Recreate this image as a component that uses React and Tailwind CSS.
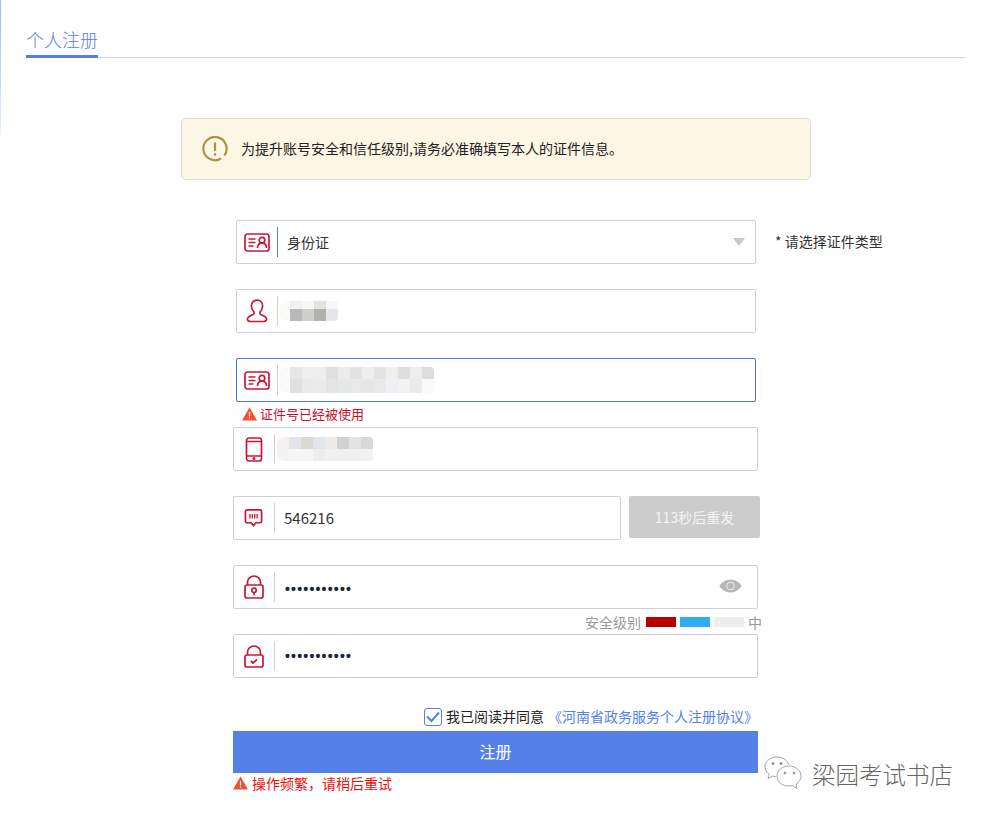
const CJK = "font-['Noto_Sans_CJK_SC','Microsoft_YaHei',sans-serif]";
const RED = "#c8183a";

function IdIcon() {
  return (
    <svg width="26" height="19" viewBox="0 0 26 19" fill="none" stroke={RED} strokeWidth="1.700" className="-ml-[1px]">
      <rect x="1" y="1" width="24" height="17" rx="2.500" />
      <path d="M4.500 6h7M4.500 9.500h7M4.500 13h5" />
      <circle cx="18" cy="7.200" r="2.800" />
      <path d="M13.500 15c0-3.200 2-4.800 4.500-4.800s4.500 1.600 4.500 4.800" />
    </svg>
  );
}
function UserIcon() {
  return (
    <svg width="22" height="24" viewBox="0 0 22 24" fill="none" stroke={RED} strokeWidth="1.700">
      <path d="M11 1.200c-3.600 0-5.600 2.600-5.600 5.800 0 2.600 1 4.400 2.400 5.800.6.700.5 2-.5 2.600-1.600.9-5.600 1.900-5.900 4.600-.2 1.500 1.400 2.500 3.400 2.500h12.400c2 0 3.600-1 3.400-2.500-.3-2.700-4.300-3.700-5.900-4.600-1-.6-1.100-1.900-.5-2.600 1.400-1.400 2.400-3.200 2.400-5.800 0-3.200-2-5.800-5.600-5.800z" />
    </svg>
  );
}
function PhoneIcon() {
  return (
    <svg width="18" height="25" viewBox="0 0 18 25" fill="none" stroke={RED} strokeWidth="1.700" className="-ml-[1px]">
      <rect x="1.500" y="1" width="15" height="23" rx="2.500" />
      <path d="M1.500 4.500h15M1.500 19h15" />
      <circle cx="9" cy="21.500" r="0.700" fill={RED} />
    </svg>
  );
}
function SmsIcon() {
  return (
    <svg width="19" height="20" viewBox="0 0 20 20" fill="none" stroke={RED} strokeWidth="1.800" className="-ml-[1px]">
      <path d="M3 1.500h14a1.500 1.500 0 0 1 1.500 1.500v10.500a1.500 1.500 0 0 1-1.500 1.500h-4.500L10 18l-2.500-3H3a1.500 1.500 0 0 1-1.500-1.500V3A1.500 1.500 0 0 1 3 1.500z" />
      <path d="M6.300 5.800v4.700M8.800 5.800v4.700M11.300 5.800v4.700M13.800 5.800v4.700" strokeWidth="1.400" />
    </svg>
  );
}
function LockIcon() {
  return (
    <svg width="20" height="24" viewBox="0 0 20 24" fill="none" stroke={RED} strokeWidth="1.700" className="-ml-[1px]">
      <path d="M3.500 10V7a6.500 6 0 0 1 13 0V10" />
      <rect x="1" y="10" width="18" height="13" rx="2" />
      <circle cx="10" cy="15.300" r="2.200" />
      <path d="M10 17.500v2.800" />
    </svg>
  );
}
function LockCheckIcon() {
  return (
    <svg width="20" height="23" viewBox="0 0 20 23" fill="none" stroke={RED} strokeWidth="1.700" className="-ml-[1px]">
      <path d="M3.500 10V7a6.500 6 0 0 1 13 0V10" />
      <rect x="1" y="10" width="18" height="12" rx="2" />
      <path d="M6.800 16l2.200 2 4-3.500" />
    </svg>
  );
}
function EyeIcon() {
  return (
    <svg width="23" height="14" viewBox="0 0 24 14">
      <path d="M12 0.200C6.500 0.200 2.500 3.800 0.300 7c2.200 3.200 6.200 6.800 11.700 6.800S21.500 10.200 23.700 7C21.500 3.800 17.500 0.200 12 0.200z" fill="#b8b8b8" />
      <circle cx="12" cy="7" r="4.200" fill="#fff" />
      <circle cx="12" cy="7" r="3.500" fill="#b8b8b8" />
    </svg>
  );
}
function Warn({ color }) {
  return (
    <svg width="15" height="14" viewBox="0 0 15 14" className="shrink-0">
      <path d="M7.500 0.500L15 13.500H0z" fill={color} />
      <path d="M7.500 5v4.500M7.500 10.500v1.300" stroke="#fff" strokeWidth="1.200" />
    </svg>
  );
}
function WeChat() {
  return (
    <svg width="38" height="34" viewBox="0 0 38 34" fill="none" stroke="#999" strokeWidth="0.900">
      <path d="M13 1C6.400 1 1 5.400 1 10.800c0 3 1.700 5.700 4.300 7.500L4 22.500l4.700-2.400c1 .3 2 .5 3 .6" fill="#fff" />
      <path d="M13 1c5.800 0 10.700 3.300 11.800 7.800" />
      <path d="M25 10c-6.600 0-12 4.200-12 10.200S18.400 30 25 30c1.300 0 2.500-.2 3.600-.5l4.400 3-1-4.300c3-1.900 5-4.700 5-8 0-6-5.400-10.200-12-10.200z" fill="#fff" />
      <circle cx="9" cy="7.500" r="1.100" fill="#888" />
      <circle cx="17" cy="7.500" r="1.100" fill="#888" />
      <circle cx="21" cy="17" r="1" fill="#888" />
      <circle cx="30" cy="17" r="1" fill="#888" />
    </svg>
  );
}

function Field({ icon, active, blueDivider, className, children }) {
  return (
    <div className={`flex h-[44px] items-center rounded-[2px] border bg-white ${active ? "border-[#4a78e0]" : "border-[#d0d0d0]"} ${className}`}>
      <div className="flex w-[40px] items-center justify-center">{icon}</div>
      <div className={`h-[30px] w-px ${blueDivider ? "bg-[#5a7fd0]" : "bg-[#d0d0d0]"}`} />
      {children}
    </div>
  );
}

function Mosaic({ rows, cols, className }) {
  return (
    <div className={`grid overflow-hidden rounded-l-[8px] rounded-r-[4px] blur-[0.6px] ${cols} ${className}`}>
      {rows.map((c, i) => (
        <div key={i} className={c} />
      ))}
    </div>
  );
}

const nameCells = [
  "h-[8px] bg-[#fbfbf9]", "h-[8px] bg-[#f1f1f1]", "h-[8px] bg-[#f6f6f6]", "h-[8px] bg-[#e3e3df]", "h-[8px] bg-[#f6f7fa]",
  "h-[12px] bg-[#fafaf6]", "h-[12px] bg-[#b9b9b9]", "h-[12px] bg-[#cfcfcc]", "h-[12px] bg-[#b2b2ac]", "h-[12px] bg-[#e6e7ed]",
];
const idCells = [
  "h-[12px] bg-[#fafafa]", "h-[12px] bg-[#e6e6e6]", "h-[12px] bg-[#eeeeee]", "h-[12px] bg-[#eeeeee]", "h-[12px] bg-[#e0e0e0]", "h-[12px] bg-[#ececec]", "h-[12px] bg-[#e2e2e2]", "h-[12px] bg-[#eeeeec]", "h-[12px] bg-[#e2e4e4]", "h-[12px] bg-[#f0efed]", "h-[12px] bg-[#dfdfdf]", "h-[12px] bg-[#eeeeee]", "h-[12px] bg-[#dddddd]",
  "h-[14px] bg-[#fafafa]", "h-[14px] bg-[#e0e0e0]", "h-[14px] bg-[#eaeaea]", "h-[14px] bg-[#ebebeb]", "h-[14px] bg-[#e3e4e3]", "h-[14px] bg-[#e5e8e8]", "h-[14px] bg-[#e8e8e8]", "h-[14px] bg-[#e7e7e7]", "h-[14px] bg-[#ebe9e7]", "h-[14px] bg-[#eef0f3]", "h-[14px] bg-[#f3f1f1]", "h-[14px] bg-[#eaeae8]", "h-[14px] bg-[#fafafa]",
];
const phoneCells = [
  "h-[12px] bg-[#f3f0ee]", "h-[12px] bg-[#e2e4ea]", "h-[12px] bg-[#dcd8d3]", "h-[12px] bg-[#e2e4ec]", "h-[12px] bg-[#ecebe9]", "h-[12px] bg-[#d2d0d0]", "h-[12px] bg-[#e2e4e4]", "h-[12px] bg-[#d8d8d8]",
  "h-[12px] bg-[#f5f3f2]", "h-[12px] bg-[#f5f6f7]", "h-[12px] bg-[#f6f6f5]", "h-[12px] bg-[#eeedeb]", "h-[12px] bg-[#eff0f2]", "h-[12px] bg-[#f0f0f0]", "h-[12px] bg-[#f0f0ee]", "h-[12px] bg-[#f0f1f3]",
];

const Dots = ({ className }) => (
  <span className={`ml-[10px] font-['Liberation_Sans',sans-serif] text-[14px] font-bold tracking-[1.200px] text-[#1c2633] ${className}`}>•••••••••••</span>
);

export default function App() {
  return (
    <div className={`relative h-[817px] w-[985px] overflow-hidden bg-white ${CJK}`}>
      <div className="absolute left-0 top-0 h-[135px] w-px bg-gradient-to-b from-[#8fbdf5] to-[#e6f1fe]" />

      <div className="ml-[26px] mr-[19px] flex h-[58px] items-end border-b border-[#d6d6de]">
        <div className="-mb-px flex h-[31px] w-[72px] items-start border-b-[3px] border-[#5580e8] text-[18px] font-light leading-[24px] whitespace-nowrap text-[#5580e8]">
          个人注册
        </div>
      </div>

      <div className="ml-[181px] mt-[60px] flex h-[62px] w-[630px] items-center rounded-[5px] border border-[#dddcd2] bg-[#fcf6e5] pl-[20px]">
        <svg width="26" height="26" viewBox="0 0 26 26" fill="none" stroke="#aa9545" strokeWidth="2.200">
          <path d="M19 22.500A11.600 11.600 0 1 1 22.300 19.500" />
          <path d="M13 6.500v8.500M13 17.300v2.500" />
        </svg>
        <span className="mb-[2px] ml-[13px] text-[14px] leading-none text-[#222]">为提升账号安全和信任级别,请务必准确填写本人的证件信息。</span>
      </div>

      <div className="ml-[233px] mt-[40px] flex w-[525px] flex-col">
        <div className="flex">
          <Field icon={<IdIcon />} blueDivider className="ml-[3px] w-[520px] shrink-0">
            <span className="ml-[9px] flex-1 text-[14px] text-[#333]">身份证</span>
            <div className="mr-[10px] h-0 w-0 border-x-[6px] border-t-[8px] border-x-transparent border-t-[#c8c8c8]" />
          </Field>
          <span className="ml-[19px] mt-[11px] shrink-0 whitespace-nowrap text-[14px] text-[#333]">* 请选择证件类型</span>
        </div>

        <Field icon={<UserIcon />} className="ml-[3px] mt-[25px] w-[520px]">
          <Mosaic rows={nameCells} cols="grid-cols-[11px_12px_12px_12px_12px]" className="ml-[1px]" />
        </Field>

        <Field icon={<IdIcon />} active className="ml-[3px] mt-[25px] w-[520px]">
          <Mosaic rows={idCells} cols="grid-cols-[11px_repeat(12,12px)]" className="ml-[1px]" />
        </Field>

        <div className="ml-[9px] flex h-[25px] items-center gap-[3px] pb-[1px] text-[13px] text-[#c8102e]">
          <Warn color="#f4502f" />
          <span>证件号已经被使用</span>
        </div>

        <Field icon={<PhoneIcon />} className="w-[525px]">
          <Mosaic rows={phoneCells} cols="grid-cols-[repeat(8,12px)]" className="ml-[2px]" />
        </Field>

        <div className="mt-[25px] flex items-start">
          <Field icon={<SmsIcon />} className="w-[388px] shrink-0">
            <span className="ml-[9px] text-[15px] text-[#333]">546216</span>
          </Field>
          <div className="ml-[8px] flex h-[42px] w-[131px] shrink-0 items-center justify-center rounded-[2px] bg-[#cccccc] text-[14px] text-[#f4f4f4]">
            113秒后重发
          </div>
        </div>

        <Field icon={<LockIcon />} className="mt-[25px] w-[525px]">
          <div className="flex-1"><Dots /></div>
          <div className="mb-[3px] mr-[15px]"><EyeIcon /></div>
        </Field>

        <div className="-mr-1 flex h-[25px] items-center justify-end pt-[1px] text-[14px] text-[#999]">
          <span>安全级别</span>
          <div className="ml-[5px] h-[10px] w-[30px] bg-[#b80000]" />
          <div className="ml-[4px] h-[10px] w-[30px] bg-[#2eaeee]" />
          <div className="ml-[4px] h-[10px] w-[30px] bg-[#eeeeee]" />
          <span className="ml-[4px]">中</span>
        </div>

        <Field icon={<LockCheckIcon />} className="w-[525px]">
          <Dots className="mt-[1px]" />
        </Field>

        <div className="mt-[30px] flex h-[18px] items-center justify-end text-[14px] leading-none">
          <div className="flex h-[18px] w-[18px] items-center justify-center rounded-[3px] border border-[#5580e8]">
            <svg width="14" height="12" viewBox="0 0 14 12" fill="none" stroke="#5580e8" strokeWidth="2">
              <path d="M1 5.500l4.500 4.500L13 1.500" />
            </svg>
          </div>
          <span className="mb-[3px] ml-[4px] text-[#222]">我已阅读并同意</span>
          <span className="mb-[3px] ml-[4px] text-[#5580e8]">《河南省政务服务个人注册协议》</span>
        </div>

        <div className="mt-[5px] flex h-[42px] items-center justify-center bg-[#5580e8] pb-[2px] text-[16px] text-white">注册</div>

        <div className="mt-[3px] flex h-[14px] items-center gap-[4px] text-[14px] text-[#f20d0d]">
          <Warn color="#f4502f" />
          <span>操作频繁，请稍后重试</span>
        </div>
      </div>

      <div className="absolute left-[764px] top-[756px] flex items-center">
        <WeChat />
        <span className="ml-[10px] mt-[3px] text-[23.500px] font-light leading-none whitespace-nowrap text-[#666]">梁园考试书店</span>
      </div>
    </div>
  );
}
